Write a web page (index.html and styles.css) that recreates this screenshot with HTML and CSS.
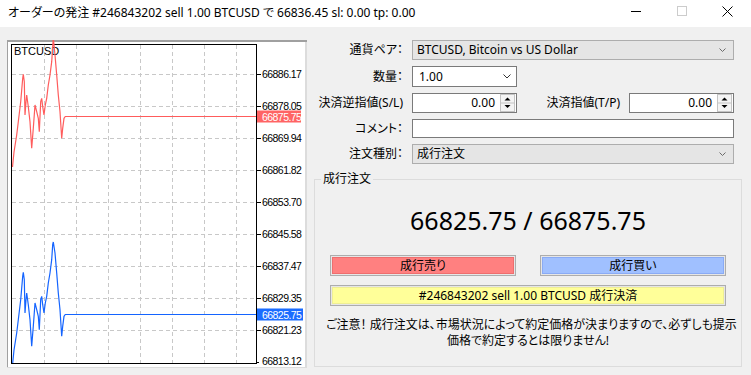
FILE: index.html
```html
<!DOCTYPE html>
<html lang="ja">
<head>
<meta charset="utf-8">
<title>オーダーの発注</title>
<link rel="stylesheet" href="styles.css">
</head>
<body>
<div class="titlebar">
  <span class="title">オーダーの発注 #246843202 sell 1.00 BTCUSD で 66836.45 sl: 0.00 tp: 0.00</span>
  <div class="wincontrols">
    <svg class="wc" width="46" height="27" viewBox="0 0 46 27"><line x1="18" y1="11.5" x2="28" y2="11.5" stroke="#000" stroke-width="1"/></svg>
    <svg class="wc" width="46" height="27" viewBox="0 0 46 27"><rect x="18.5" y="6.5" width="9" height="9" fill="none" stroke="#cccccc" stroke-width="1"/></svg>
    <svg class="wc" width="46" height="27" viewBox="0 0 46 27"><path d="M17.5 6.5 L27.5 16.5 M27.5 6.5 L17.5 16.5" stroke="#000" stroke-width="1" fill="none"/></svg>
  </div>
</div>

<div class="main">
  <svg class="chart" width="300" height="328" viewBox="7 40 300 328">
    <defs>
      <clipPath id="plot"><rect x="12" y="42" width="244" height="321"/></clipPath>
    </defs>
    <rect x="7" y="40" width="300" height="328" fill="#ffffff"/>
    <rect x="7" y="40" width="300" height="2" fill="#a0a0a0"/>
    <rect x="7" y="40" width="1" height="328" fill="#a0a0a0"/>
    <rect x="305" y="42" width="2" height="326" fill="#dcdcdc"/>
    <rect x="7" y="367" width="300" height="1" fill="#dcdcdc"/>
    <g stroke="#c8c8c8" stroke-width="1" stroke-dasharray="4 3">
      <line x1="12" y1="74.5" x2="256" y2="74.5"/>
      <line x1="12" y1="106.5" x2="256" y2="106.5"/>
      <line x1="12" y1="138.5" x2="256" y2="138.5"/>
      <line x1="12" y1="170.5" x2="256" y2="170.5"/>
      <line x1="12" y1="202.5" x2="256" y2="202.5"/>
      <line x1="12" y1="234.5" x2="256" y2="234.5"/>
      <line x1="12" y1="266.5" x2="256" y2="266.5"/>
      <line x1="12" y1="298.5" x2="256" y2="298.5"/>
      <line x1="12" y1="330.5" x2="256" y2="330.5"/>
      <line x1="44.5" y1="45" x2="44.5" y2="363"/>
      <line x1="76.5" y1="45" x2="76.5" y2="363"/>
      <line x1="108.5" y1="45" x2="108.5" y2="363"/>
      <line x1="140.5" y1="45" x2="140.5" y2="363"/>
      <line x1="172.5" y1="45" x2="172.5" y2="363"/>
      <line x1="204.5" y1="45" x2="204.5" y2="363"/>
      <line x1="236.5" y1="45" x2="236.5" y2="363"/>
    </g>
    <rect x="11.5" y="44.5" width="245" height="319" fill="none" stroke="#000" stroke-width="1"/>
    <g stroke="#000" stroke-width="1">
      <line x1="257" y1="74.5" x2="261" y2="74.5"/>
      <line x1="257" y1="106.5" x2="261" y2="106.5"/>
      <line x1="257" y1="138.5" x2="261" y2="138.5"/>
      <line x1="257" y1="170.5" x2="261" y2="170.5"/>
      <line x1="257" y1="202.5" x2="261" y2="202.5"/>
      <line x1="257" y1="234.5" x2="261" y2="234.5"/>
      <line x1="257" y1="266.5" x2="261" y2="266.5"/>
      <line x1="257" y1="298.5" x2="261" y2="298.5"/>
      <line x1="257" y1="330.5" x2="261" y2="330.5"/>
      <line x1="257" y1="362.5" x2="259" y2="362.5"/>
    </g>
    <text class="sym" x="14" y="55">BTCUSD</text>
    <g class="axis">
      <text x="262" y="78">66886.17</text>
      <text x="262" y="110">66878.05</text>
      <text x="262" y="142">66869.94</text>
      <text x="262" y="174">66861.82</text>
      <text x="262" y="206">66853.70</text>
      <text x="262" y="238">66845.58</text>
      <text x="262" y="270">66837.47</text>
      <text x="262" y="302">66829.35</text>
      <text x="262" y="334">66821.23</text>
      <text x="262" y="365">66813.12</text>
    </g>
    <path id="ask" fill="none" stroke="#ff5c5c" stroke-width="1.2" d="M12.5,167 L14,152 L16.7,135 L18.3,121.7 L20.7,101.7 L22.7,78.3 L23.3,74.3 L24.3,81.7 L25,115 L26,101.7 L26.7,95 L28.3,106.7 L30,121.7 L31.7,148.3 L33.3,128.3 L35,105 L36.7,111.7 L38.3,118.3 L39.3,131.7 L40.7,101.7 L41.7,98.3 L42.7,106.7 L44,115 L45.3,105 L46.7,98.3 L48.3,85 L50,75 L51.7,61.7 L52.7,46.7 L53.3,38 L55,55 L56.7,75 L58.3,95 L60,111.7 L61.7,138.3 L62.7,128.3 L64,118.3 L65.3,116.5 L256,116.5"/>
    <g clip-path="url(#plot)">
      <path fill="none" stroke="#1464ff" stroke-width="1.2" transform="translate(0,198)" d="M12.5,167 L14,152 L16.7,135 L18.3,121.7 L20.7,101.7 L22.7,78.3 L23.3,74.3 L24.3,81.7 L25,115 L26,101.7 L26.7,95 L28.3,106.7 L30,121.7 L31.7,148.3 L33.3,128.3 L35,105 L36.7,111.7 L38.3,118.3 L39.3,131.7 L40.7,101.7 L41.7,98.3 L42.7,106.7 L44,115 L45.3,105 L46.7,98.3 L48.3,85 L50,75 L51.7,61.7 L52.7,46.7 L53.3,44 L55,55 L56.7,75 L58.3,95 L60,111.7 L61.7,138.3 L62.7,128.3 L64,118.3 L65.3,116.5 L256,116.5"/>
    </g>
    <rect x="257" y="110.5" width="44" height="12" fill="#ff6464"/>
    <text class="tag" x="262" y="120.5">66875.75</text>
    <rect x="257" y="308.5" width="46" height="12" fill="#1a6cff"/>
    <text class="tag" x="262" y="318.5">66825.75</text>
  </svg>

  <div class="side">
    <div class="form">
      <div class="row">
        <span class="lbl">通貨ペア：</span>
        <div class="field select w-full">
          <span class="val">BTCUSD, Bitcoin vs US Dollar</span>
          <svg class="chev" width="7" height="4" viewBox="0 0 7 4"><polyline points="0.5,0.5 3.5,3.5 6.5,0.5" fill="none" stroke="#6a6a6a" stroke-width="1"/></svg>
        </div>
      </div>
      <div class="row">
        <span class="lbl">数量：</span>
        <div class="field combo w-small">
          <span class="val">1.00</span>
          <svg class="chev" width="8" height="5" viewBox="0 0 8 5"><polyline points="0.5,0.5 4,4 7.5,0.5" fill="none" stroke="#333" stroke-width="1"/></svg>
        </div>
      </div>
      <div class="row">
        <span class="lbl">決済逆指値(S/L)</span>
        <div class="field num w-small">
          <span class="val right">0.00</span>
          <div class="spin">
            <svg width="15" height="18" viewBox="0 0 15 18"><rect x="0.5" y="0.5" width="14" height="17" fill="#f4f4f4" stroke="#c4c4c4"/><line x1="1" y1="9" x2="14" y2="9" stroke="#c4c4c4"/><polygon points="4.5,6.5 10.5,6.5 7.5,3.5" fill="#000"/><polygon points="4.5,11 10.5,11 7.5,14" fill="#000"/></svg>
          </div>
        </div>
        <span class="lbl2">決済指値(T/P)</span>
        <div class="field num w-small">
          <span class="val right">0.00</span>
          <div class="spin">
            <svg width="15" height="18" viewBox="0 0 15 18"><rect x="0.5" y="0.5" width="14" height="17" fill="#f4f4f4" stroke="#c4c4c4"/><line x1="1" y1="9" x2="14" y2="9" stroke="#c4c4c4"/><polygon points="4.5,6.5 10.5,6.5 7.5,3.5" fill="#000"/><polygon points="4.5,11 10.5,11 7.5,14" fill="#000"/></svg>
          </div>
        </div>
      </div>
      <div class="row">
        <span class="lbl">コメント：</span>
        <div class="field text w-full h19"></div>
      </div>
      <div class="row">
        <span class="lbl">注文種別：</span>
        <div class="field select w-full">
          <span class="val">成行注文</span>
          <svg class="chev" width="7" height="4" viewBox="0 0 7 4"><polyline points="0.5,0.5 3.5,3.5 6.5,0.5" fill="none" stroke="#6a6a6a" stroke-width="1"/></svg>
        </div>
      </div>
    </div>

    <div class="group">
      <span class="group-title">成行注文</span>
      <div class="price">66825.75 / 66875.75</div>
      <div class="btnrow">
        <div class="btn"><div class="btn-in sell">成行売り</div></div>
        <div class="btn"><div class="btn-in buy">成行買い</div></div>
      </div>
      <div class="btn wide"><div class="btn-in close">#246843202 sell 1.00 BTCUSD 成行決済</div></div>
      <p class="notice">ご注意！ 成行注文は、市場状況によって約定価格が決まりますので、必ずしも提示<br>価格で約定するとは限りません!</p>
    </div>
  </div>
</div>
</body>
</html>
```

FILE: styles.css
```css
* { box-sizing: border-box; }

html, body {
  margin: 0;
  padding: 0;
}

body {
  width: 751px;
  height: 375px;
  overflow: hidden;
  background: #f0f0f0;
  color: #000;
  font-family: "Noto Sans", "Noto Sans CJK JP", sans-serif;
  font-size: 12px;
  font-feature-settings: "palt";
}

.titlebar {
  height: 27px;
  background: #ffffff;
  display: flex;
  align-items: center;
  padding-left: 8px;
}

.title {
  white-space: nowrap;
  line-height: 16px;
  margin-top: -2px;
}

.wincontrols {
  margin-left: auto;
  display: flex;
  align-self: flex-start;
}

.wc { display: block; }

.main {
  display: flex;
  align-items: flex-start;
  padding: 13px 0 0 7px;
}

.chart {
  display: block;
  flex: none;
}

.chart .sym {
  font-family: "Liberation Sans", sans-serif;
  font-size: 11px;
  fill: #000;
}

.chart .axis text,
.chart .tag {
  font-family: "Liberation Sans", sans-serif;
  font-size: 10.5px;
  letter-spacing: -0.55px;
  fill: #000;
}

.chart .tag { fill: #ffffff; }

.side {
  margin-left: 6px;
  width: 429px;
  flex: none;
}

.form {
  width: 421px;
  display: flex;
  flex-direction: column;
  gap: 6px;
}

.row {
  display: flex;
  align-items: center;
}

.lbl {
  width: 90px;
  margin-right: 9px;
  text-align: right;
  white-space: nowrap;
  line-height: 16px;
}

.lbl2 {
  width: 103px;
  margin-right: 9px;
  text-align: right;
  white-space: nowrap;
  line-height: 16px;
}

.field {
  height: 20px;
  display: flex;
  align-items: center;
  border: 1px solid #7a7a7a;
  background: #ffffff;
  line-height: 16px;
}

.w-full { width: 322px; }
.w-small { width: 105px; }
.h19 { height: 19px; }

.select {
  background: #e5e5e5;
  border-color: #adadad;
  padding: 0 7px 0 4px;
}

.combo {
  height: 21px;
  padding: 0 5px 0 6px;
}

.val {
  flex: 1;
  white-space: nowrap;
}

.val.right {
  text-align: right;
  padding-right: 5px;
}

.chev { display: block; flex: none; }

.num { padding-right: 1px; }

.spin {
  display: flex;
  align-items: center;
}

.spin svg { display: block; }

.group {
  position: relative;
  margin: 15px 0 0 1px;
  width: 428px;
  height: 188px;
  border: 1px solid #dcdcdc;
  display: flex;
  flex-direction: column;
  align-items: center;
}

.group-title {
  position: absolute;
  top: -9px;
  left: 6px;
  padding: 0 2px;
  background: #f0f0f0;
  line-height: 16px;
}

.price {
  margin-top: 25px;
  font-size: 25px;
  line-height: 30px;
  white-space: nowrap;
}

.btnrow {
  margin-top: 20px;
  width: 396px;
  display: flex;
  justify-content: space-between;
}

.btn {
  width: 186px;
  height: 21px;
  border: 1px solid #adadad;
  background: #e6e6e6;
  padding: 1px;
}

.btn.wide {
  width: 396px;
  margin-top: 9px;
}

.btn-in {
  height: 100%;
  display: flex;
  align-items: center;
  justify-content: center;
  white-space: nowrap;
  line-height: 15px;
  border: 1px solid transparent;
}

.sell { background: #ff8080; border-color: #ee6e6e; }
.buy { background: #a0c0ff; border-color: #8aabf5; }
.close { background: #ffff99; border-color: #eeee95; }

.notice {
  margin: 11px 0 0;
  width: 404px;
  text-align: center;
  line-height: 16px;
  white-space: nowrap;
}
```
